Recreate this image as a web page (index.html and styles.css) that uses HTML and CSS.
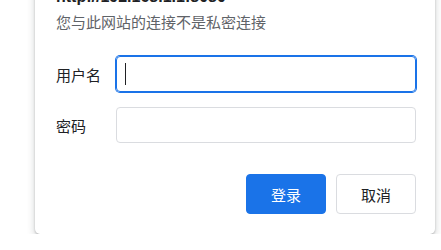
FILE: index.html
```html
<!DOCTYPE html>
<html lang="zh-CN">
<head>
<meta charset="utf-8">
<link rel="stylesheet" href="styles.css">
</head>
<body>
<div class="page">
  <div class="dialog">
    <div class="title">http://192.168.1.1:8080</div>
    <div class="subtitle">您与此网站的连接不是私密连接</div>
    <div class="form">
      <div class="row">
        <div class="label">用户名</div>
        <div class="field focused"><span class="caret"></span></div>
      </div>
      <div class="row">
        <div class="label">密码</div>
        <div class="field"></div>
      </div>
    </div>
    <div class="actions">
      <div class="btn primary">登录</div>
      <div class="btn">取消</div>
    </div>
  </div>
</div>
</body>
</html>
```
FILE: styles.css
```css
html, body {
  margin: 0;
  padding: 0;
  background: #ffffff;
  overflow: hidden;
}
body {
  font-family: "Liberation Sans", "Noto Sans CJK SC", sans-serif;
  color: #202124;
}
.page {
  padding: 0 6px 0 35px;
}
.dialog {
  width: 400px;
  box-sizing: border-box;
  margin-top: -42px;
  padding: 29px 19px 20px 21px;
  background: #ffffff;
  border-radius: 5px;
  box-shadow: 0 1px 2px rgba(60, 64, 67, 0.3), 0 2px 6px 2px rgba(60, 64, 67, 0.15);
}
.title {
  font-size: 16px;
  font-weight: bold;
  line-height: 20px;
  color: #202124;
}
.subtitle {
  margin-top: 6px;
  font-size: 15px;
  line-height: 20px;
  color: #5f6368;
}
.form {
  margin-top: 23px;
  display: flex;
  flex-direction: column;
  gap: 15px;
}
.row {
  display: flex;
  align-items: center;
}
.label {
  width: 60px;
  font-size: 15px;
  color: #202124;
}
.field {
  width: 300px;
  height: 36px;
  box-sizing: border-box;
  border: 1px solid #dadce0;
  border-radius: 4px;
  display: flex;
  align-items: center;
  padding-left: 8px;
}
.field.focused {
  border-color: #1a73e8;
  box-shadow: 0 0 0 1px #1a73e8;
}
.caret {
  width: 1px;
  height: 22px;
  background: #202124;
}
.actions {
  margin-top: 31px;
  display: flex;
  justify-content: flex-end;
  gap: 10px;
}
.btn {
  width: 80px;
  height: 40px;
  box-sizing: border-box;
  border: 1px solid #dadce0;
  border-radius: 4px;
  display: flex;
  align-items: center;
  justify-content: center;
  font-size: 15px;
  color: #202124;
  background: #ffffff;
}
.btn.primary {
  background: #1a73e8;
  border-color: #1a73e8;
  color: #ffffff;
}
```
